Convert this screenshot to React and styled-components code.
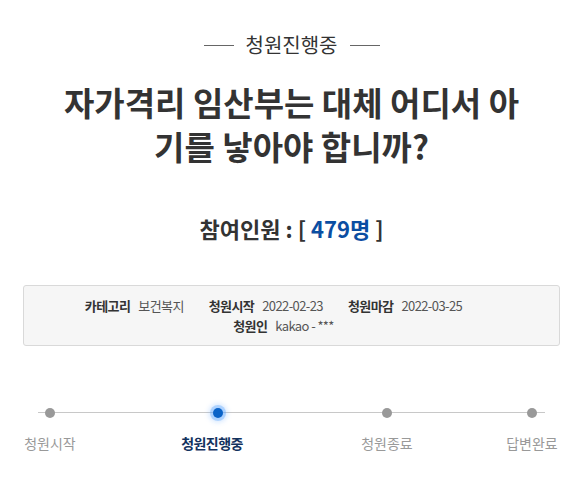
import React from 'react';
import styled, { createGlobalStyle } from 'styled-components';

const GlobalStyle = createGlobalStyle`
  html, body {
    margin: 0;
    padding: 0;
    background: #fff;
  }
  body {
    font-family: "Noto Sans CJK KR", "Noto Sans", sans-serif;
    color: #333;
  }
`;

const Page = styled.div`
  width: 583px;
  padding: 31px 23px 0 23px;
  box-sizing: border-box;
`;

const Status = styled.div`
  display: flex;
  align-items: center;
  justify-content: center;
  gap: 12px;
  font-size: 20px;
  line-height: 28px;
  color: #333;
  &::before,
  &::after {
    content: '';
    width: 30px;
    height: 1px;
    background: #666;
  }
`;

const Title = styled.h1`
  margin: 21px 0 0 0;
  font-size: 33px;
  line-height: 44px;
  font-weight: 700;
  text-align: center;
  color: #333;
`;

const TitleLine = styled.span`
  display: block;
  white-space: nowrap;
`;

const Count = styled.div`
  margin-top: 44px;
  font-size: 22px;
  font-weight: 700;
  line-height: 32px;
  text-align: center;
  color: #333;
  span {
    color: #0b4ea2;
  }
`;

const InfoBox = styled.div`
  margin-top: 41px;
  height: 61px;
  box-sizing: border-box;
  border: 1px solid #d9d9d9;
  border-radius: 3px;
  background: #f6f6f6;
  display: flex;
  flex-direction: column;
  align-items: center;
  justify-content: center;
  font-size: 13px;
  line-height: 20px;
`;

const InfoRow = styled.div`
  display: flex;
  gap: 25px;
  padding-right: ${p => p.$shift || 0}px;
`;

const InfoItem = styled.div`
  display: flex;
  gap: 8px;
  letter-spacing: -0.6px;
  b {
    font-weight: 700;
    color: #333;
  }
  span {
    color: #555;
  }
`;

const Progress = styled.div`
  margin-top: 62px;
  position: relative;
  display: flex;
  &::before {
    content: '';
    position: absolute;
    left: 15px;
    right: 15px;
    top: 4px;
    height: 1px;
    background: #c8c8c8;
  }
`;

const Step = styled.div`
  position: relative;
  width: ${p => p.$w}px;
  margin-left: ${p => p.$ml}px;
  display: flex;
  flex-direction: column;
  align-items: center;
  gap: 15px;
`;

const Dot = styled.div`
  width: 10px;
  height: 10px;
  border-radius: 50%;
  background: ${p => (p.$active ? '#0a63c8' : '#999')};
  box-shadow: ${p => (p.$active ? '0 0 0 3px rgba(80,160,255,0.35), 0 0 4px 5px rgba(120,180,255,0.25)' : 'none')};
`;

const Label = styled.div`
  font-size: 14px;
  line-height: 20px;
  white-space: nowrap;
  color: ${p => (p.$active ? '#13325e' : '#999')};
  font-weight: ${p => (p.$active ? 700 : 400)};
  letter-spacing: ${p => (p.$active ? '-0.6px' : '0')};
  margin-right: ${p => p.$shift || 0}px;
`;

const steps = [
  { label: '청원시작', w: 52, ml: 1 },
  { label: '청원진행중', w: 66, ml: 109, active: true, shift: 12 },
  { label: '청원종료', w: 50, ml: 111 },
  { label: '답변완료', w: 54, ml: 93 },
];

export default function App() {
  return (
    <>
      <GlobalStyle />
      <Page>
        <Status>청원진행중</Status>
        <Title>
          <TitleLine>자가격리 임산부는 대체 어디서 아</TitleLine>
          <TitleLine>기를 낳아야 합니까?</TitleLine>
        </Title>
        <Count>
          참여인원 : [ <span>479명</span> ]
        </Count>
        <InfoBox>
          <InfoRow $shift={36}>
            <InfoItem><b>카테고리</b><span>보건복지</span></InfoItem>
            <InfoItem><b>청원시작</b><span>2022-02-23</span></InfoItem>
            <InfoItem><b>청원마감</b><span>2022-03-25</span></InfoItem>
          </InfoRow>
          <InfoRow $shift={16}>
            <InfoItem><b>청원인</b><span>kakao - ***</span></InfoItem>
          </InfoRow>
        </InfoBox>
        <Progress>
          {steps.map(s => (
            <Step key={s.label} $w={s.w} $ml={s.ml}>
              <Dot $active={s.active} />
              <Label $active={s.active} $shift={s.shift}>{s.label}</Label>
            </Step>
          ))}
        </Progress>
      </Page>
    </>
  );
}
